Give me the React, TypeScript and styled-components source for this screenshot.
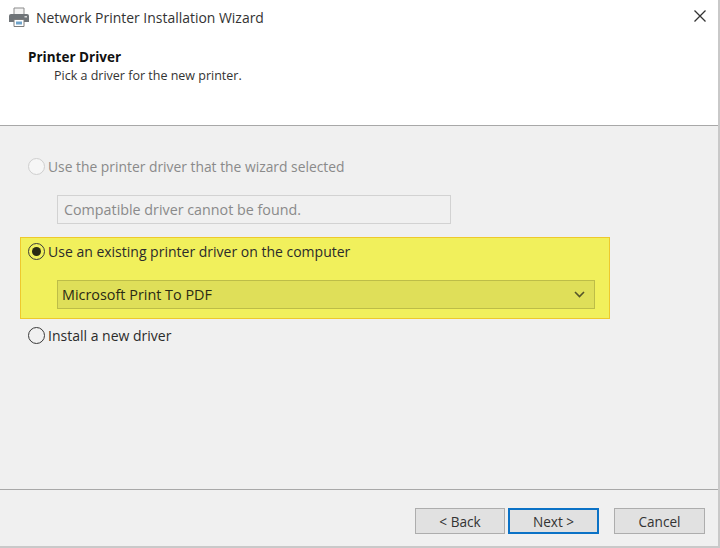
import React from "react";
import styled, { createGlobalStyle } from "styled-components";

const Global = createGlobalStyle`
  html, body { margin: 0; padding: 0; background: #f0f0f0; }
  body { font-family: "Open Sans", "Noto Sans", "Liberation Sans", sans-serif; }
`;

const Win = styled.div`
  width: 720px;
  height: 548px;
  box-sizing: border-box;
  display: flex;
  flex-direction: column;
  background: #f0f0f0;
  border-right: 2px solid #c9c9c9;
  border-bottom: 2px solid #c9c9c9;
  overflow: hidden;
  color: #2b2b2b;
`;

const Header = styled.header`
  height: 126px;
  flex: none;
  box-sizing: border-box;
  background: #fff;
  border-bottom: 1px solid #a8a8a8;
  display: flex;
  flex-direction: column;
`;

const TitleBar = styled.div`
  display: flex;
  align-items: center;
  height: 34px;
  padding: 0 11px 0 9px;
  gap: 7px;
`;

const TitleText = styled.span`
  font-size: 13.95px;
  color: #333;
  flex: 1;
`;

const HeadBlock = styled.div`
  padding: 14px 0 0 28px;
`;

const HeadTitle = styled.div`
  font-size: 13.5px;
  font-weight: 700;
  line-height: 18px;
  color: #111;
`;

const HeadSub = styled.div`
  font-size: 12.5px;
  line-height: 19px;
  padding-left: 26px;
  color: #333;
`;

const Body = styled.main`
  flex: 1;
  padding: 28px 0 0 20px;
  display: flex;
  flex-direction: column;
  align-items: flex-start;
`;

const RadioRow = styled.div<{ $off?: boolean; $inset?: number; $size?: number }>`
  display: flex;
  align-items: center;
  gap: 3px;
  height: 24px;
  padding-left: ${(p) => p.$inset ?? 8}px;
  font-size: ${(p) => p.$size ?? 13.85}px;
  color: ${(p) => (p.$off ? "#8a8a8a" : "#2b2b2b")};
`;

const RadioDot = styled.span<{ $state: "off" | "on" | "idle" }>`
  width: 17px;
  height: 17px;
  box-sizing: border-box;
  flex: none;
  border-radius: 50%;
  background: ${(p) => (p.$state === "off" ? "#f6f6f6" : "transparent")};
  border: 1.5px solid ${(p) => (p.$state === "off" ? "#cfcfcf" : "#3a3a3a")};
  display: flex;
  align-items: center;
  justify-content: center;
  &::after {
    content: "";
    display: ${(p) => (p.$state === "on" ? "block" : "none")};
    width: 9px;
    height: 9px;
    border-radius: 50%;
    background: #2a2a14;
  }
`;

const DisabledField = styled.div`
  margin: 17px 0 13px 37px;
  width: 394px;
  height: 29px;
  box-sizing: border-box;
  border: 1px solid #d2d2d2;
  padding-left: 6px;
  display: flex;
  align-items: center;
  font-size: 14.3px;
  color: #8a8a8a;
`;

const Highlight = styled.section`
  width: 590px;
  height: 82px;
  box-sizing: border-box;
  background: #f1f05c;
  border: 1px solid #eec92c;
  padding-top: 1px;
  display: flex;
  flex-direction: column;
  align-items: flex-start;
`;

const Combo = styled.div`
  margin: 17px 0 0 36px;
  width: 538px;
  height: 29px;
  box-sizing: border-box;
  background: #dfdf59;
  border: 1px solid #bdbd48;
  padding: 0 9px 0 4px;
  display: flex;
  align-items: center;
  justify-content: space-between;
  font-size: 14.4px;
  color: #2a2a14;
`;

const InstallRow = styled(RadioRow)`
  margin-top: 4px;
`;

const Footer = styled.footer`
  height: 57px;
  flex: none;
  box-sizing: border-box;
  border-top: 1px solid #a8a8a8;
  display: flex;
  justify-content: flex-end;
  align-items: flex-start;
  padding: 18px 13px 0 0;
`;

const Button = styled.button<{ $primary?: boolean; $gap?: number; $w?: number }>`
  width: ${(p) => p.$w ?? 91}px;
  height: 26px;
  box-sizing: border-box;
  margin-left: ${(p) => p.$gap ?? 0}px;
  padding: 0;
  background: #e1e1e1;
  border: ${(p) => (p.$primary ? "2px solid #0b72c6" : "1px solid #adadad")};
  font-family: inherit;
  font-size: 13.6px;
  color: #333;
`;

const PrinterIcon = () => (
  <svg width="20" height="20" viewBox="0 0 20 20" aria-hidden="true">
    <path d="M5 1h10v7H5z" fill="#f4f4f4" stroke="#8b8b8b" />
    <path d="M2 7h16a2 2 0 0 1 2 2v6H0V9a2 2 0 0 1 2-2z" fill="#6f7478" />
    <path d="M5 12.500h10v7H5z" fill="#fff" stroke="#7d7d7d" />
    <path d="M7 14.500h6v3H7z" fill="#6fa3c9" />
    <rect x="15.500" y="9" width="2.500" height="1.500" fill="#d8d8d8" />
  </svg>
);

const CloseIcon = () => (
  <svg width="14" height="14" viewBox="0 0 14 14" aria-hidden="true" style={{ marginTop: -2 }}>
    <path d="M1.500 1.500l11 11M12.500 1.500l-11 11" stroke="#333" strokeWidth="1.300" fill="none" />
  </svg>
);

const Chevron = () => (
  <svg width="11" height="7" viewBox="0 0 11 7" aria-hidden="true">
    <path d="M1 1l4.500 4.500L10 1" stroke="#55552a" strokeWidth="1.600" fill="none" />
  </svg>
);

export default function App() {
  return (
    <>
      <Global />
      <Win>
        <Header>
          <TitleBar>
            <PrinterIcon />
            <TitleText>Network Printer Installation Wizard</TitleText>
            <CloseIcon />
          </TitleBar>
          <HeadBlock>
            <HeadTitle>Printer Driver</HeadTitle>
            <HeadSub>Pick a driver for the new printer.</HeadSub>
          </HeadBlock>
        </Header>
        <Body>
          <RadioRow $off>
            <RadioDot $state="off" />
            Use the printer driver that the wizard selected
          </RadioRow>
          <DisabledField>Compatible driver cannot be found.</DisabledField>
          <Highlight>
            <RadioRow $inset={7} $size={14}>
              <RadioDot $state="on" />
              Use an existing printer driver on the computer
            </RadioRow>
            <Combo>
              Microsoft Print To PDF
              <Chevron />
            </Combo>
          </Highlight>
          <InstallRow $size={14}>
            <RadioDot $state="idle" />
            Install a new driver
          </InstallRow>
        </Body>
        <Footer>
          <Button $w={90}>&lt; Back</Button>
          <Button $primary $gap={3}>Next &gt;</Button>
          <Button $gap={15}>Cancel</Button>
        </Footer>
      </Win>
    </>
  );
}
